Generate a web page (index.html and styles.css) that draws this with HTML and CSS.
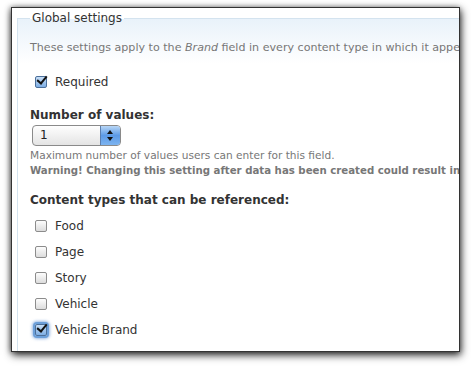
FILE: index.html
```html
<!DOCTYPE html>
<html lang="en">
<head>
    <meta charset="UTF-8">
    <title>Field settings</title>
    <link rel="stylesheet" href="styles.css">
</head>
<body>
    <div class="window">
        <fieldset class="settings">
            <legend>Global settings</legend>
            <p class="intro">These settings apply to the <em>Brand</em> field in every content type in which it appears.</p>

            <label class="check">
                <span class="box checked"></span>
                Required
            </label>

            <div class="field">
                <div class="field-label">Number of values:</div>
                <div class="select">
                    <span class="select-value">1</span>
                    <span class="select-arrows"></span>
                </div>
                <div class="desc first">Maximum number of values users can enter for this field.</div>
                <div class="desc warn">Warning! Changing this setting after data has been created could result in the loss of data!</div>
            </div>

            <div class="field types">
                <div class="field-label">Content types that can be referenced:</div>
                <label class="check"><span class="box"></span>Food</label>
                <label class="check"><span class="box"></span>Page</label>
                <label class="check"><span class="box"></span>Story</label>
                <label class="check"><span class="box"></span>Vehicle</label>
                <label class="check"><span class="box checked focus"></span>Vehicle Brand</label>
            </div>
        </fieldset>
    </div>
</body>
</html>
```

FILE: styles.css
```css
/* Global Styles */
body {
    margin: 0;
    padding: 7px 0 15px 11px;
    background: #fff;
    font-family: "DejaVu Sans", Verdana, sans-serif;
    color: #333;
}

/* Window */
.window {
    width: 447px;
    height: 343px;
    border: 1px solid #333;
    background: #fff;
    overflow: hidden;
    box-shadow: 1px 3px 8px rgba(0, 0, 0, 0.85), -1px 0 5px rgba(0, 0, 0, 0.35);
}

.settings {
    margin: 2px 0 0 5px;
    padding: 0 0 40px 12px;
    width: 600px;
    border: 1px solid #d4e3ef;
    border-right: none;
    background: linear-gradient(#e9f2fa, #ffffff 45px);
}

.settings legend {
    font-size: 12px;
    color: #333;
    padding: 0 2px;
    line-height: 16px;
}

.intro {
    margin: 15px 0 0 0;
    font-size: 11.1px;
    line-height: 14px;
    color: #777;
    white-space: nowrap;
}

/* Checkboxes */
.check {
    display: flex;
    align-items: center;
    height: 26px;
    padding-left: 5px;
    font-size: 12px;
    color: #333;
}

.settings > .check {
    margin-top: 14px;
}

.box {
    width: 10px;
    height: 10px;
    margin-right: 8px;
    border: 1px solid #8c8c8c;
    border-radius: 2px;
    background: linear-gradient(#fdfdfd, #dcdcdc);
    position: relative;
    flex: none;
}

.box.checked {
    background: linear-gradient(#c7def6, #7eaee4);
    border-color: #4b6f9a;
}

.box.checked::after {
    content: "";
    position: absolute;
    left: 3px;
    top: -3px;
    width: 4px;
    height: 8px;
    border: solid #111;
    border-width: 0 2px 2px 0;
    transform: rotate(40deg);
}

.box.focus {
    box-shadow: 0 0 0 2px #6c9fd9, 0 0 3px 3px rgba(90, 140, 210, 0.6);
}

/* Fields */
.field {
    margin-top: 13px;
}

.field.types {
    margin-top: 15px;
}

.field-label {
    font-size: 12px;
    font-weight: bold;
    line-height: 15px;
    color: #333;
    margin-bottom: 2px;
}

.types .field-label {
    margin-bottom: 5px;
}

.select {
    display: flex;
    width: 87px;
    height: 19px;
    margin-left: 2px;
    border: 1px solid #8a8a8a;
    border-radius: 4px;
    overflow: hidden;
    background: linear-gradient(#fefefe, #e4e4e4);
}

.select-value {
    flex: 1;
    font-size: 12px;
    line-height: 19px;
    padding-left: 7px;
    color: #222;
}

.select-arrows {
    width: 19px;
    border-left: 1px solid #5b7fb0;
    background: linear-gradient(#b9d7f6, #5c9ae6 50%, #7db4f0);
    position: relative;
}

.select-arrows::before,
.select-arrows::after {
    content: "";
    position: absolute;
    left: 6px;
    border-left: 3px solid transparent;
    border-right: 3px solid transparent;
}

.select-arrows::before {
    top: 4px;
    border-bottom: 4px solid #111;
}

.select-arrows::after {
    top: 11px;
    border-top: 4px solid #111;
}

.desc {
    font-size: 10.6px;
    color: #777;
    line-height: 15px;
    white-space: nowrap;
}

.desc.first {
    margin-top: 2px;
}

.warn {
    font-size: 10.2px;
    font-weight: bold;
}
```
